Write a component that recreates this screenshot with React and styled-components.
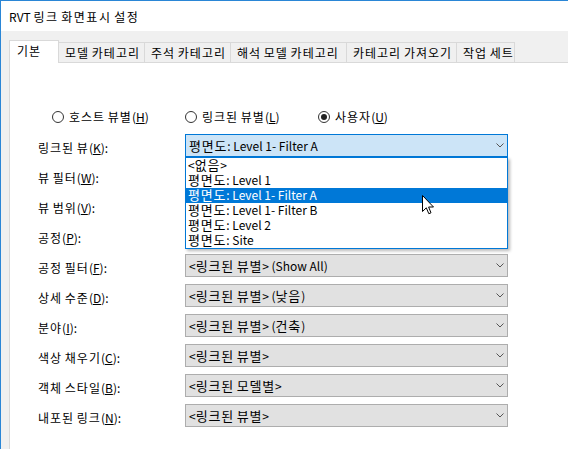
import React from 'react';
import styled, { createGlobalStyle } from 'styled-components';

const Global = createGlobalStyle`
  html, body { margin: 0; padding: 0; background: #fff; }
  body {
    font-family: "Noto Sans CJK KR", sans-serif;
    font-size: 12px;
    color: #000;
  }
  * { box-sizing: border-box; }
`;

const Window = styled.div`
  width: 568px;
  height: 449px;
  overflow: hidden;
  display: flex;
  flex-direction: column;
  border-left: 1px solid #2a86d6;
  border-top: 1px solid #2a86d6;
  background: #f0f0f0;
`;

const TitleBar = styled.div`
  height: 30px;
  flex: none;
  background: #fff;
  display: flex;
  align-items: center;
  padding-left: 8px;
  font-size: 12px;
  color: #000;
  white-space: pre;
`;

const Body = styled.div`
  flex: 1;
  padding: 9px 0 0 8px;
  display: flex;
  flex-direction: column;
  min-height: 0;
`;

const TabStrip = styled.div`
  display: flex;
  align-items: flex-end;
  height: 22px;
  flex: none;
  position: relative;
  z-index: 2;
`;

const Tab = styled.div`
  width: ${p => p.$w}px;
  height: ${p => (p.$active ? 23 : 20)}px;
  margin-left: -1px;
  margin-bottom: ${p => (p.$active ? -1 : 0)}px;
  border: 1px solid #d9d9d9;
  border-bottom: none;
  background: ${p => (p.$active ? '#fff' : '#f0f0f0')};
  padding: 0 0 ${p => (p.$active ? 3 : 0)}px ${p => (p.$active ? 7 : 6)}px;
  display: flex;
  align-items: center;
  white-space: pre;
  &:first-child { margin-left: 0; }
`;

const Panel = styled.div`
  width: 600px;
  height: 420px;
  flex: none;
  background: #fff;
  border: 1px solid #d9d9d9;
  position: relative;
  z-index: 1;
  display: flex;
  flex-direction: column;
`;

const RadioRow = styled.div`
  display: grid;
  grid-template-columns: 133px 133px auto;
  margin-top: 45px;
  padding-left: 42px;
  height: 16px;
`;

const RadioItem = styled.div`
  display: flex;
  align-items: center;
  gap: 5px;
  white-space: nowrap;
`;

const RadioCircle = styled.span`
  width: 12px;
  height: 12px;
  border-radius: 50%;
  border: 1px solid #333;
  background: #fff;
  display: flex;
  align-items: center;
  justify-content: center;
  &::after {
    content: '';
    width: 6px;
    height: 6px;
    border-radius: 50%;
    background: ${p => (p.$checked ? '#222' : 'transparent')};
  }
`;

const Form = styled.div`
  display: grid;
  grid-template-columns: 147px 323px;
  grid-auto-rows: 23px;
  row-gap: 7px;
  margin-top: 10px;
  padding-left: 28px;
`;

const Label = styled.div`
  padding-top: 6px;
  line-height: 16px;
  white-space: nowrap;
`;

const ComboWrap = styled.div`
  position: relative;
  z-index: ${p => (p.$open ? 5 : 1)};
`;

const Combo = styled.div`
  height: 23px;
  border: 1px solid ${p => (p.$focus ? '#0078d7' : '#adadad')};
  background: ${p => (p.$focus ? '#cce4f7' : '#e1e1e1')};
  display: flex;
  align-items: center;
  padding: 0 3px 0 3px;
  white-space: nowrap;
`;

const ComboText = styled.span`
  line-height: 16px;
`;

const Chevron = styled.svg`
  margin-left: auto;
  flex: none;
`;

const DropList = styled.div`
  position: absolute;
  top: 100%;
  left: 0;
  right: 0;
  background: #fff;
  border: 1px solid #0078d7;
  box-shadow: 2px 2px 3px rgba(0, 0, 0, 0.28);
`;

const ListItem = styled.div`
  height: 15px;
  line-height: 14px;
  padding-left: 2px;
  white-space: nowrap;
  background: ${p => (p.$sel ? '#0078d7' : 'transparent')};
  color: ${p => (p.$sel ? '#fff' : '#000')};
`;

const Cursor = styled.svg`
  position: absolute;
  left: 236px;
  top: 37px;
`;

const Ko = styled.span`
  letter-spacing: ${p => p.$ls}px;
  font-size: ${p => p.$size}px;
`;

const HANGUL = /([\u1100-\u11FF\u3130-\u318F\uAC00-\uD7AF]+)/;

const KoText = ({ children, ls = 1, size = 12 }) => (
  <span>
    {String(children)
      .split(HANGUL)
      .map((part, i) =>
        HANGUL.test(part) ? (
          <Ko key={i} $ls={ls} $size={size}>
            {part}
          </Ko>
        ) : (
          <React.Fragment key={i}>{part}</React.Fragment>
        )
      )}
  </span>
);

const tabs = [
  ['기본', 50],
  ['모델 카테고리', 87],
  ['주석 카테고리', 87],
  ['해석 모델 카테고리', 117],
  ['카테고리 가져오기', 111],
  ['작업 세트', 59],
];

const rows = [
  ['링크된 뷰', 'K', '평면도: Level 1- Filter A', true],
  ['뷰 필터', 'W', ''],
  ['뷰 범위', 'V', ''],
  ['공정', 'P', ''],
  ['공정 필터', 'F', '<링크된 뷰별> (Show All)'],
  ['상세 수준', 'D', '<링크된 뷰별> (낮음)'],
  ['분야', 'I', '<링크된 뷰별> (건축)'],
  ['색상 채우기', 'C', '<링크된 뷰별>'],
  ['객체 스타일', 'B', '<링크된 모델별>'],
  ['내포된 링크', 'N', '<링크된 뷰별>'],
];

const items = [
  '<없음>',
  '평면도: Level 1',
  '평면도: Level 1- Filter A',
  '평면도: Level 1- Filter B',
  '평면도: Level 2',
  '평면도: Site',
];

const ChevronIcon = () => (
  <Chevron width="8" height="5" viewBox="0 0 8 5">
    <polyline points="0.5,0.5 4,4 7.5,0.5" fill="none" stroke="#555" strokeWidth="1" />
  </Chevron>
);

const Radio = ({ label, acc, checked }) => (
  <RadioItem>
    <RadioCircle $checked={checked} />
    <span>
      <KoText>{label}</KoText>(<u>{acc}</u>)
    </span>
  </RadioItem>
);

export default function App() {
  return (
    <>
      <Global />
      <Window>
        <TitleBar>
          <KoText ls={1.5}>RVT 링크 화면표시 설정</KoText>
        </TitleBar>
        <Body>
          <TabStrip>
            {tabs.map(([t, w], i) => (
              <Tab key={t} $w={w} $active={i === 0}>
                <KoText>{t}</KoText>
              </Tab>
            ))}
          </TabStrip>
          <Panel>
            <RadioRow>
              <Radio label="호스트 뷰별" acc="H" />
              <Radio label="링크된 뷰별" acc="L" />
              <Radio label="사용자" acc="U" checked />
            </RadioRow>
            <Form>
              {rows.map(([label, acc, value, open]) => (
                <React.Fragment key={label}>
                  <Label>
                    <KoText>{label}</KoText>(<u>{acc}</u>):
                  </Label>
                  <ComboWrap $open={open}>
                    <Combo $focus={open}>
                      <ComboText>
                        <KoText ls={0.8} size={13}>{value}</KoText>
                      </ComboText>
                      <ChevronIcon />
                    </Combo>
                    {open && (
                      <DropList>
                        {items.map((it, i) => (
                          <ListItem key={it} $sel={i === 2}>
                            <KoText ls={0.8} size={13}>{it}</KoText>
                          </ListItem>
                        ))}
                        <Cursor width="12" height="20" viewBox="0 0 12 20">
                          <path
                            d="M0.5,0.5 L0.5,16.5 L4.3,12.8 L6.8,18.7 L9,17.8 L6.6,12 L11.5,12 Z"
                            fill="#fff"
                            stroke="#000"
                            strokeWidth="1"
                            strokeLinejoin="miter"
                          />
                        </Cursor>
                      </DropList>
                    )}
                  </ComboWrap>
                </React.Fragment>
              ))}
            </Form>
          </Panel>
        </Body>
      </Window>
    </>
  );
}
